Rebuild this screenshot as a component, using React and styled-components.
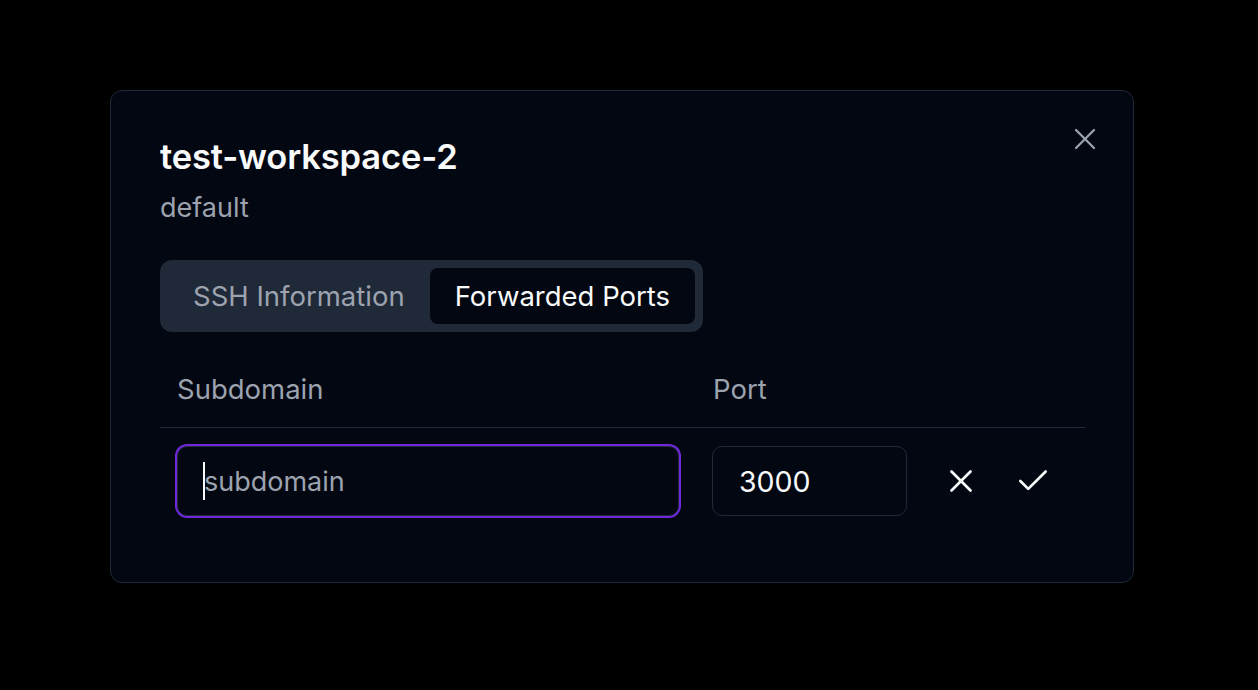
import React from "react";
import styled, { createGlobalStyle } from "styled-components";

const Global = createGlobalStyle`
  html, body { margin: 0; padding: 0; background: #000; }
  body { font-family: Inter, "Noto Sans", sans-serif; -webkit-font-smoothing: antialiased; }
  * { box-sizing: border-box; }
`;

const Page = styled.div`
  width: 1258px;
  height: 690px;
  background: #000;
  padding: 90px 0 0 110px;
`;

const Dialog = styled.div`
  position: relative;
  width: 1024px;
  height: 493px;
  background: #030712;
  border: 1.5px solid #1f2937;
  border-radius: 12px;
  padding: 44px 48px 48px 49px;
  display: flex;
  flex-direction: column;
`;

const Title = styled.h2`
  margin: 0;
  font-size: 34.5px;
  font-weight: 600;
  letter-spacing: -0.15px;
  color: #f9fafb;
  line-height: 44px;
`;

const Subtitle = styled.p`
  margin: 11px 0 0;
  font-size: 27px;
  color: #9ca3af;
  line-height: 36px;
`;

const CloseButton = styled.button`
  position: absolute;
  top: 29.5px;
  right: 30.5px;
  width: 36px;
  height: 36px;
  padding: 0;
  border: none;
  background: transparent;
  color: #9ca3af;
  display: flex;
  align-items: center;
  justify-content: center;
`;

const TabList = styled.div`
  margin-top: 34px;
  align-self: flex-start;
  display: flex;
  background: #1f2937;
  border-radius: 12px;
  padding: 8px;
  height: 72px;
  flex-shrink: 0;
`;

const Tab = styled.div`
  display: flex;
  align-items: center;
  padding: 0 25px;
  border-radius: 8px;
  font-size: 27.5px;
  color: ${(p) => (p.$active ? "#f9fafb" : "#9ca3af")};
  background: ${(p) => (p.$active ? "#030712" : "transparent")};
`;

const Table = styled.div`
  margin-top: 24px;
  display: grid;
  grid-template-columns: 536px 228px 1fr;
`;

const HeaderCell = styled.div`
  height: 72px;
  padding: 0 17px 6px 17px;
  display: flex;
  align-items: center;
  font-size: 27.5px;
  color: #9ca3af;
  border-bottom: 1.5px solid #1f2937;
`;

const Cell = styled.div`
  padding: 18px 17px 16px ${(p) => p.$pl || "17px"};
  display: flex;
  align-items: center;
`;

const Input = styled.div`
  height: 70px;
  width: ${(p) => p.$w || "100%"};
  border: 1.5px solid #1f2937;
  border-radius: 10px;
  background: #030712;
  display: flex;
  align-items: center;
  padding: 0 26px;
  font-size: ${(p) => (p.$placeholder ? "27px" : "28.5px")};
  color: ${(p) => (p.$placeholder ? "#9ca3af" : "#f9fafb")};
  box-shadow: ${(p) => (p.$focus ? "0 0 0 2px #6d28d9" : "none")};
`;

const Caret = styled.span`
  display: inline-block;
  width: 2px;
  height: 38px;
  background: #f9fafb;
  margin-right: -1px;
  margin-left: -1px;
`;

const Actions = styled.div`
  display: flex;
  align-items: center;
  gap: 32px;
`;

const IconButton = styled.button`
  width: 40px;
  height: 40px;
  padding: 0;
  border: none;
  background: transparent;
  color: #f9fafb;
  display: flex;
  align-items: center;
  justify-content: center;
`;

const XIcon = ({ size = 24, sw = 2 }) => (
  <svg width={size} height={size} viewBox="0 0 24 24" fill="none" stroke="currentColor" strokeWidth={sw} strokeLinecap="round" strokeLinejoin="round">
    <path d="M18 6 6 18" />
    <path d="m6 6 12 12" />
  </svg>
);

const CheckIcon = ({ size = 24, sw = 2 }) => (
  <svg width={size} height={size} viewBox="0 0 24 24" fill="none" stroke="currentColor" strokeWidth={sw} strokeLinecap="round" strokeLinejoin="round">
    <path d="M20 6 9 17l-5-5" />
  </svg>
);

export default function App() {
  return (
    <>
      <Global />
      <Page>
        <Dialog>
          <CloseButton aria-label="Close">
            <XIcon size={36} sw={1.5} />
          </CloseButton>
          <Title>test-workspace-2</Title>
          <Subtitle>default</Subtitle>
          <TabList>
            <Tab>SSH Information</Tab>
            <Tab $active>Forwarded Ports</Tab>
          </TabList>
          <Table>
            <HeaderCell>Subdomain</HeaderCell>
            <HeaderCell>Port</HeaderCell>
            <HeaderCell />
            <Cell>
              <Input $focus $placeholder>
                <Caret />
                subdomain
              </Input>
            </Cell>
            <Cell $pl="16px">
              <Input $w="196px">3000</Input>
            </Cell>
            <Cell $pl="17px">
              <Actions>
                <IconButton aria-label="Cancel">
                  <XIcon size={38} sw={1.7} />
                </IconButton>
                <IconButton aria-label="Save">
                  <CheckIcon size={38} sw={1.7} />
                </IconButton>
              </Actions>
            </Cell>
          </Table>
        </Dialog>
      </Page>
    </>
  );
}
